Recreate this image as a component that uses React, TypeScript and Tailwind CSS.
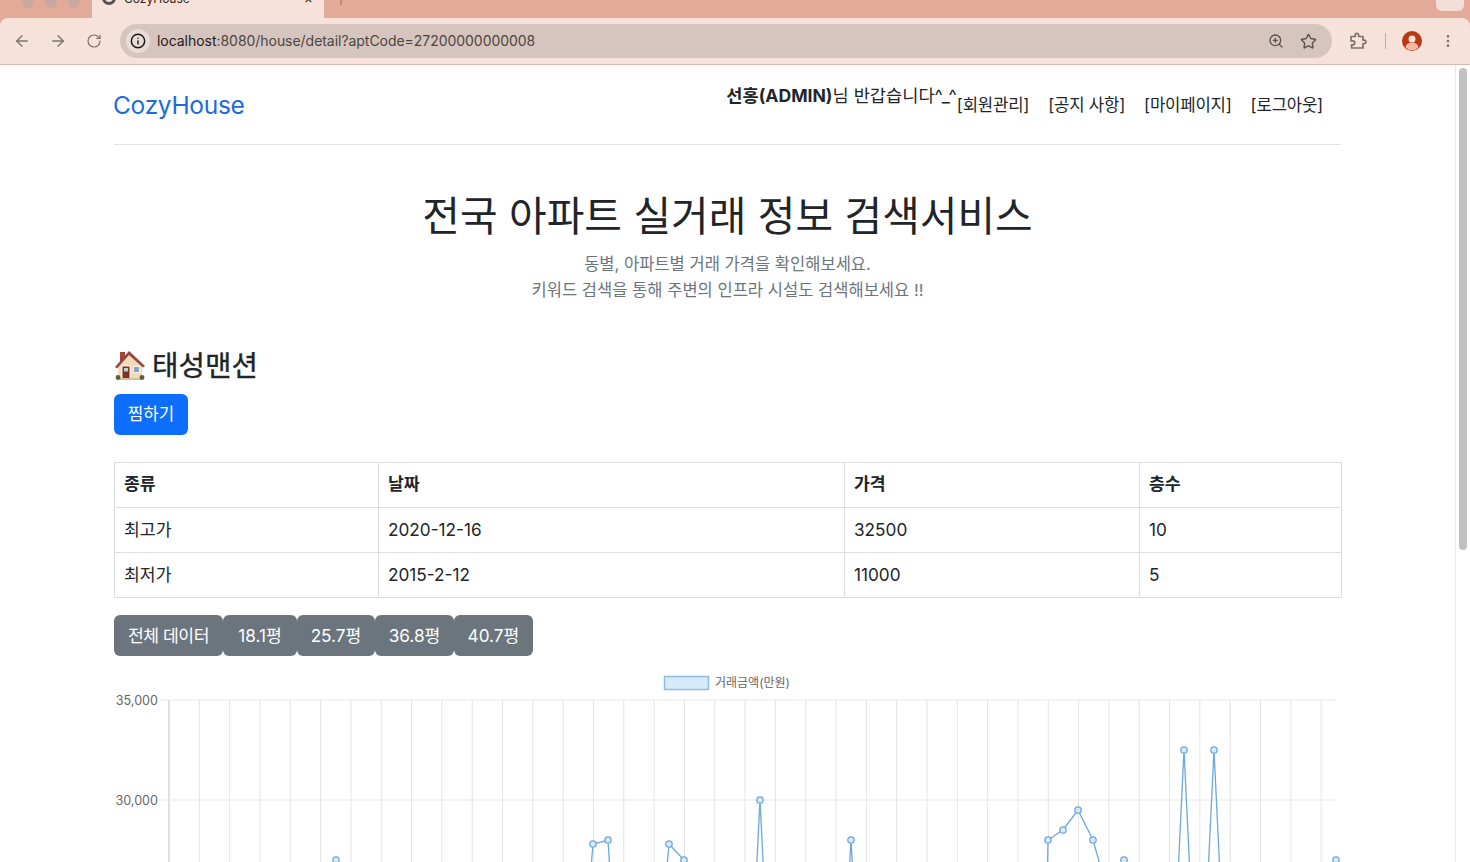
import { ArrowLeft, ArrowRight, Info, MoreVertical, RotateCw, Star, ZoomIn } from 'lucide-react'

const gridXs = Array.from({ length: 39 }, (_, i) => 169 + i * 30.32)

// clipped at the bottom of the window, so the low points only set the slope
const priceLines = [
  '331,1000 336,860 341,1000',
  '580,1000 593,844 608,840 618,1000',
  '655,1000 669,844 684,860 694,1000',
  '750,1000 760,800 770,1000',
  '842,1000 851,840 860,1000',
  '1045,1000 1048,840 1063,830 1078,810 1093,840 1110,900',
  '1115,1000 1124,860 1133,1000',
  '1172,1000 1184,750 1196,1000',
  '1202,1000 1214,750 1226,1000',
  '1330,1000 1336,860',
]

const pricePoints = [
  [336, 860], [593, 844], [608, 840], [669, 844], [684, 860], [760, 800], [851, 840], [1048, 840],
  [1063, 830], [1078, 810], [1093, 840], [1124, 860], [1184, 750], [1214, 750], [1336, 860],
]

const rows = [
  { kind: '최고가', date: '2020-12-16', price: '32500', floor: '10' },
  { kind: '최저가', date: '2015-2-12', price: '11000', floor: '5' },
]

const sizes = [
  { label: '전체 데이터', className: 'w-[109px] tracking-[-0.5px]' },
  { label: '18.1평', className: 'w-[74px]' },
  { label: '25.7평', className: 'w-[78px]' },
  { label: '36.8평', className: 'w-[79px]' },
  { label: '40.7평', className: 'w-[79px]' },
]

function BrowserChrome() {
  return (
    <div className="h-[65px] shrink-0 bg-[#e3aa99] overflow-hidden">
      <div className="h-[18px] flex items-start">
        <div className="w-[92px] h-[18px] rounded-br-lg flex gap-[11px] pl-[22px] -mt-[4px]">
          <span className="w-3 h-3 rounded-full bg-[#c9a89e]" />
          <span className="w-3 h-3 rounded-full bg-[#c9a89e]" />
          <span className="w-3 h-3 rounded-full bg-[#c9a89e]" />
        </div>
        <div className="w-[232px] h-[18px] bg-[#f6e2da] flex items-start pl-[10px] pr-[11px] overflow-hidden">
          <span className="w-[14px] h-[14px] rounded-full border-[3px] border-[#55504e] -mt-[9px]" />
          <span className="ml-[8px] -mt-[9px] text-[12px] leading-[16px] text-[#2c2826]">CozyHouse</span>
          <span className="ml-auto -mt-[10px] text-[14px] leading-[16px] text-[#2c2826]">×</span>
        </div>
        <span className="ml-[16px] w-[2px] h-[5px] bg-[#b98b7c]" />
        <div className="ml-auto mr-[6px] w-[28px] h-[11px] bg-[#f3dfd7] rounded-b-md" />
      </div>
      <div className="h-[47px] bg-[#f7e2da] rounded-tl-lg rounded-tr-lg border-b border-[#deb9ab] flex items-center text-[#7d716c]">
        <div className="w-[120px] flex items-center gap-[18px] pl-[13px]">
          <ArrowLeft size={18} strokeWidth={1.8} />
          <ArrowRight size={18} strokeWidth={1.8} />
          <RotateCw size={16} strokeWidth={1.8} className="ml-[1px]" />
        </div>
        <div className="w-[1212px] h-[34px] rounded-full bg-[#d6c5be] flex items-center pl-[6px] pr-[15px]">
          <span className="w-[24px] h-[24px] rounded-full bg-[#e9dcd6] flex items-center justify-center text-[#1d1a19]">
            <Info size={16} strokeWidth={2.2} />
          </span>
          <span className="ml-[7px] text-[14px] leading-none tracking-[-0.04px] text-[#4b4543]">
            <span className="text-[#1f1c1b]">localhost</span>:8080/house/detail?aptCode=27200000000008
          </span>
          <ZoomIn size={16} strokeWidth={2} className="ml-auto text-[#5b5350]" />
          <Star size={17} strokeWidth={2} className="ml-[16px] text-[#5b5350]" />
        </div>
        <svg width="18" height="18" viewBox="0 0 18 18" fill="none" stroke="currentColor" strokeWidth="1.7" strokeLinejoin="round" className="ml-[17px]">
          <path d="M2 4.5h4.2V3a1.7 1.7 0 0 1 3.4 0v1.5H14v3.6h1.2a1.7 1.7 0 0 1 0 3.4H14V16H2.6v-3.2h1.1a2 2 0 0 0 0-4H2z" />
        </svg>
        <span className="ml-[18px] w-px h-[16px] bg-[#dd9f8d]" />
        <svg width="20" height="20" viewBox="0 0 20 20" className="ml-[16px]">
          <circle cx="10" cy="10" r="10" fill="#b83a12" />
          <circle cx="10" cy="8" r="3.5" fill="#f7e2da" />
          <path d="M3.5 16.5a6.5 5 0 0 1 13 0a9 9 0 0 1-13 0z" fill="#f2b9a5" />
        </svg>
        <MoreVertical size={16} strokeWidth={2} className="ml-[18px]" />
      </div>
    </div>
  )
}

function HouseEmoji() {
  return (
    <svg width="32" height="32" viewBox="0 0 32 32">
      <rect x="6" y="2" width="5" height="9" fill="#a5453a" />
      <path d="M4 16 15 3l13 13v12H4z" fill="#f6d9b8" />
      <path d="M1 17 15 1l16 15-2 1.5L15 5 3 18.5z" fill="#8f4a40" />
      <rect x="7" y="15" width="10" height="14" fill="#f9efe2" />
      <rect x="8.5" y="16.5" width="7" height="12.5" fill="#7f3327" />
      <rect x="10" y="18" width="4" height="3.5" fill="#b9d2e0" />
      <rect x="19" y="16" width="7" height="7" fill="#fbf3e8" />
      <rect x="20" y="17" width="5" height="5" fill="#7ea8c6" />
      <rect x="3" y="28" width="26" height="2" fill="#d9bd97" />
      <circle cx="4" cy="27.5" r="2.4" fill="#56633f" />
      <circle cx="28" cy="27.5" r="2.4" fill="#56633f" />
    </svg>
  )
}

function PriceChart() {
  return (
    <svg width="1227" height="192" viewBox="114 670 1227 192" className="block mt-[14px]">
      <rect x="664.5" y="676.5" width="44" height="13" fill="#d6eafa" stroke="#8dbde4" strokeWidth="1.5" />
      <text x="715" y="687" fontSize="12" fill="#666666">거래금액(만원)</text>
      {gridXs.map((x) => (
        <line key={x} x1={x} x2={x} y1="700" y2="862" stroke={x === 169 ? '#d6d6d6' : '#e3e3e3'} strokeWidth={x === 169 ? 1.5 : 1} />
      ))}
      <line x1="160" x2="1336" y1="700" y2="700" stroke="#e8e8e8" />
      <line x1="160" x2="1336" y1="800" y2="800" stroke="#e8e8e8" />
      <text x="158" y="704.5" fontSize="12.6" fill="#666666" textAnchor="end">35,000</text>
      <text x="158" y="804.5" fontSize="12.6" fill="#666666" textAnchor="end">30,000</text>
      {priceLines.map((points) => (
        <polyline key={points} points={points} fill="none" stroke="#6ba8dc" strokeWidth="1.3" />
      ))}
      {pricePoints.map(([x, y]) => (
        <circle key={x} cx={x} cy={y} r="3.2" fill="#d6eafa" stroke="#6ba8dc" strokeWidth="1.3" />
      ))}
    </svg>
  )
}

export default function App() {
  return (
    <div className="h-[862px] overflow-hidden flex flex-col bg-white text-[#212529] font-['Inter','Noto_Sans_CJK_KR',sans-serif]">
      <BrowserChrome />
      <div className="flex-1 flex min-h-0">
        <main className="w-[1455px] pl-[114px] pr-[114px] overflow-hidden">
          <header className="h-[80px] border-b border-[#e5e5e5] flex items-start">
            <a className="mt-[24px] -ml-[1px] text-[24.5px] leading-[32px] tracking-[-0.3px] text-[#1b6cd8]">CozyHouse</a>
            <div className="ml-auto mr-[18px] flex items-start">
              <span className="mt-[18px] text-[17.6px] leading-[26px]">
                <b className="font-bold">선홍(ADMIN)</b>님 반갑습니다^_^
              </span>
              <nav className="mt-[28px] flex gap-[19px] text-[16.7px] leading-[24px] tracking-[-0.2px]">
                <span>[회원관리]</span>
                <span>[공지 사항]</span>
                <span>[마이페이지]</span>
                <span>[로그아웃]</span>
              </nav>
            </div>
          </header>

          <section className="mt-[41px] text-center">
            <h1 className="text-[40.9px] leading-[60px] font-normal">전국 아파트 실거래 정보 검색서비스</h1>
            <p className="mt-[5px] text-[16.55px] leading-[26px] text-[#6c757d]">
              동별, 아파트별 거래 가격을 확인해보세요.
              <br />
              키워드 검색을 통해 주변의 인프라 시설도 검색해보세요 !!
            </p>
          </section>

          <h2 className="mt-[42px] flex items-center gap-[6px] h-[42px] text-[28.8px] leading-[42px] font-normal [-webkit-text-stroke:0.35px_#212529]">
            <HouseEmoji />
            태성맨션
          </h2>
          <button className="block mt-[7px] h-[41px] w-[74px] rounded-[6px] bg-[#0d6efd] text-white text-[16.8px]">찜하기</button>

          <table className="mt-[27px] w-[1227px] table-fixed border-collapse text-[17.2px]">
            <colgroup>
              <col className="w-[264px]" />
              <col className="w-[466px]" />
              <col className="w-[295px]" />
              <col className="w-[202px]" />
            </colgroup>
            <thead>
              <tr className="h-[45px] text-left">
                <th className="border border-[#dedede] px-[9px] pb-[3px] font-semibold">종류</th>
                <th className="border border-[#dedede] px-[9px] pb-[3px] font-semibold">날짜</th>
                <th className="border border-[#dedede] px-[9px] pb-[3px] font-semibold">가격</th>
                <th className="border border-[#dedede] px-[9px] pb-[3px] font-semibold">층수</th>
              </tr>
            </thead>
            <tbody>
              {rows.map((row) => (
                <tr key={row.kind} className="h-[45px]">
                  <td className="border border-[#dedede] px-[9px] pb-[1px]">{row.kind}</td>
                  <td className="border border-[#dedede] px-[9px] pb-[1px]">{row.date}</td>
                  <td className="border border-[#dedede] px-[9px] pb-[1px]">{row.price}</td>
                  <td className="border border-[#dedede] px-[9px] pb-[1px]">{row.floor}</td>
                </tr>
              ))}
            </tbody>
          </table>

          <div className="mt-[17px] flex">
            {sizes.map((size) => (
              <button
                key={size.label}
                className={`h-[41px] rounded-[6px] bg-[#6c757d] text-white text-[17.2px] ${size.className}`}
              >
                {size.label}
              </button>
            ))}
          </div>

          <PriceChart />
        </main>
        <aside className="w-[15px] border-l border-[#e8e8e8] bg-white pt-[3px] pl-[3px]">
          <div className="w-[8px] h-[482px] rounded-full bg-[#c1c1c1]" />
        </aside>
      </div>
    </div>
  )
}
